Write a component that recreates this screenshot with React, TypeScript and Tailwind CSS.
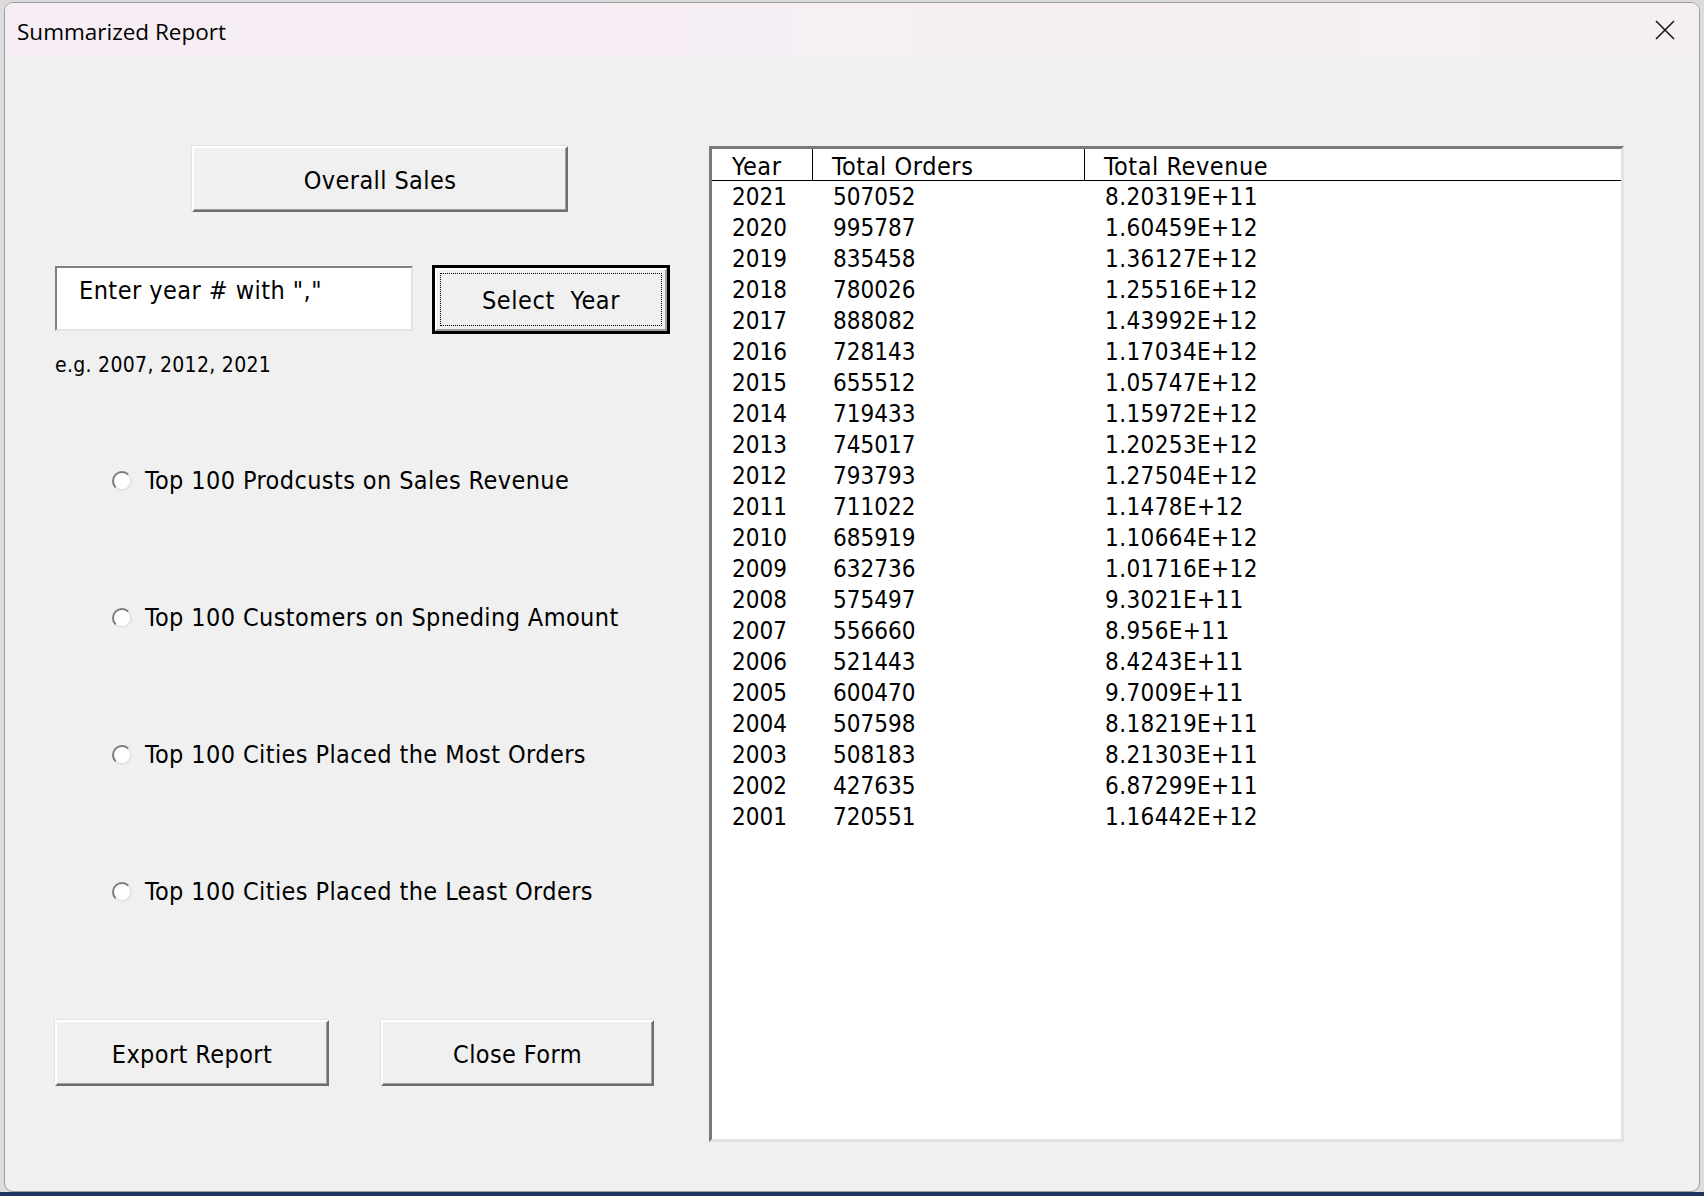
import React from "react";

const rows: [string, string, string][] = [
  ["2021", "507052", "8.20319E+11"],
  ["2020", "995787", "1.60459E+12"],
  ["2019", "835458", "1.36127E+12"],
  ["2018", "780026", "1.25516E+12"],
  ["2017", "888082", "1.43992E+12"],
  ["2016", "728143", "1.17034E+12"],
  ["2015", "655512", "1.05747E+12"],
  ["2014", "719433", "1.15972E+12"],
  ["2013", "745017", "1.20253E+12"],
  ["2012", "793793", "1.27504E+12"],
  ["2011", "711022", "1.1478E+12"],
  ["2010", "685919", "1.10664E+12"],
  ["2009", "632736", "1.01716E+12"],
  ["2008", "575497", "9.3021E+11"],
  ["2007", "556660", "8.956E+11"],
  ["2006", "521443", "8.4243E+11"],
  ["2005", "600470", "9.7009E+11"],
  ["2004", "507598", "8.18219E+11"],
  ["2003", "508183", "8.21303E+11"],
  ["2002", "427635", "6.87299E+11"],
  ["2001", "720551", "1.16442E+12"],
];

const radios = [
  "Top 100 Prodcusts on Sales Revenue",
  "Top 100 Customers on Spneding Amount",
  "Top 100 Cities Placed the Most Orders",
  "Top 100 Cities Placed the Least Orders",
];

function Btn({ children, className }: { children: React.ReactNode; className: string }) {
  return (
    <div
      className={
        "flex items-center justify-center pt-[4px] bg-[#f0f0f0] border-2 border-t-white border-l-white border-r-[#6e6e6e] border-b-[#6e6e6e] shadow-[inset_-1px_-1px_0_#a0a0a0,-1px_-1px_0_#e3e3e3] text-[25px] tracking-[0.4px] text-black " +
        className
      }
    >
      {children}
    </div>
  );
}

function Radio() {
  return (
    <div className="w-[20px] h-[20px] rounded-full bg-white border-2 border-t-[#7a7a7a] border-l-[#7a7a7a] border-r-[#e3e3e3] border-b-[#e3e3e3] shrink-0" />
  );
}

export default function App() {
  return (
    <div className="w-[1704px] h-[1196px] overflow-hidden bg-[linear-gradient(to_bottom,#dcdcdc_1192px,#1e3560_1192px)] pt-[2px] pl-[4px] font-['DejaVu_Sans_Condensed','DejaVu_Sans',sans-serif]">
      <div className="w-[1696px] h-[1190px] rounded-[9px] border border-[#9c9c9c] bg-[#f0f0f0] overflow-hidden flex flex-col">
        {/* Title bar */}
        <div className="h-[54px] shrink-0 bg-[linear-gradient(to_right,#f7edf5,#f4f0f2)] flex items-center justify-between pl-[12px] pr-[24px]">
          <span className="pt-[3px] font-['Open_Sans','Noto_Sans',sans-serif] text-[22.5px] text-black">Summarized Report</span>
          <svg width="20" height="20" viewBox="0 0 20 20" fill="none" stroke="#1a1a1a" strokeWidth="1.6">
            <path d="M1 1 L19 19 M19 1 L1 19" />
          </svg>
        </div>

        {/* Body */}
        <div className="flex flex-1 pl-[50px] pt-[89px]">
          {/* Left column */}
          <div className="w-[615px] flex flex-col">
            <Btn className="ml-[137px] w-[376px] h-[66px]">Overall Sales</Btn>

            <div className="flex items-start mt-[53px]">
              <div className="mt-[1px] w-[358px] h-[65px] bg-white border-2 border-t-[#808080] border-l-[#808080] border-r-[#e3e3e3] border-b-[#e3e3e3] pl-[22px] pt-[8px] text-[25px] tracking-[0.45px] text-black leading-[29px]">
                Enter year # with ","
              </div>
              <div className="ml-[19px] w-[238px] h-[69px] border-[3px] border-black">
                <div className="h-full border-2 border-t-white border-l-white border-r-[#a0a0a0] border-b-[#a0a0a0] p-[3px]">
                  <div className="h-full pt-[3px] border border-dotted border-black flex items-center justify-center text-[25px] tracking-[0.6px] text-black whitespace-pre">
                    Select  Year
                  </div>
                </div>
              </div>
            </div>

            <div className="mt-[19px] text-[21px] tracking-[0.3px] leading-[24px] text-black">e.g. 2007, 2012, 2021</div>

            <div className="mt-[89px] flex flex-col gap-[107px] ml-[57px]">
              {radios.map((r) => (
                <div key={r} className="flex items-center h-[30px] gap-[13px]">
                  <Radio />
                  <span className="text-[25px] tracking-[0.4px] text-black leading-[30px]">{r}</span>
                </div>
              ))}
            </div>

            <div className="mt-[113px] flex">
              <Btn className="w-[274px] h-[66px]">Export Report</Btn>
              <Btn className="ml-[52px] w-[273px] h-[66px]">Close Form</Btn>
            </div>
          </div>

          {/* List box */}
          <div className="ml-[39px] w-[915px] h-[996px] bg-white border-[3px] border-t-[#7a7a7a] border-l-[#7a7a7a] border-r-[#e3e3e3] border-b-[#e3e3e3] text-[24px] text-black">
            <div className="grid grid-cols-[101px_272px_1fr] h-[32px] border-b border-black text-[25px] tracking-[0.55px]">
              <div className="border-r border-black pl-[20px] pt-[4px] leading-[28px]">Year</div>
              <div className="border-r border-black pl-[19px] pt-[4px] leading-[28px]">Total Orders</div>
              <div className="pl-[19px] pt-[4px] leading-[28px]">Total Revenue</div>
            </div>
            <div className="pt-[1px]">
              {rows.map((r) => (
                <div key={r[0]} className="grid grid-cols-[101px_272px_1fr] h-[31px] leading-[31px]">
                  <div className="pl-[20px]">{r[0]}</div>
                  <div className="pl-[20px]">{r[1]}</div>
                  <div className="pl-[20px] tracking-[0.4px]">{r[2]}</div>
                </div>
              ))}
            </div>
          </div>
        </div>
      </div>
    </div>
  );
}
